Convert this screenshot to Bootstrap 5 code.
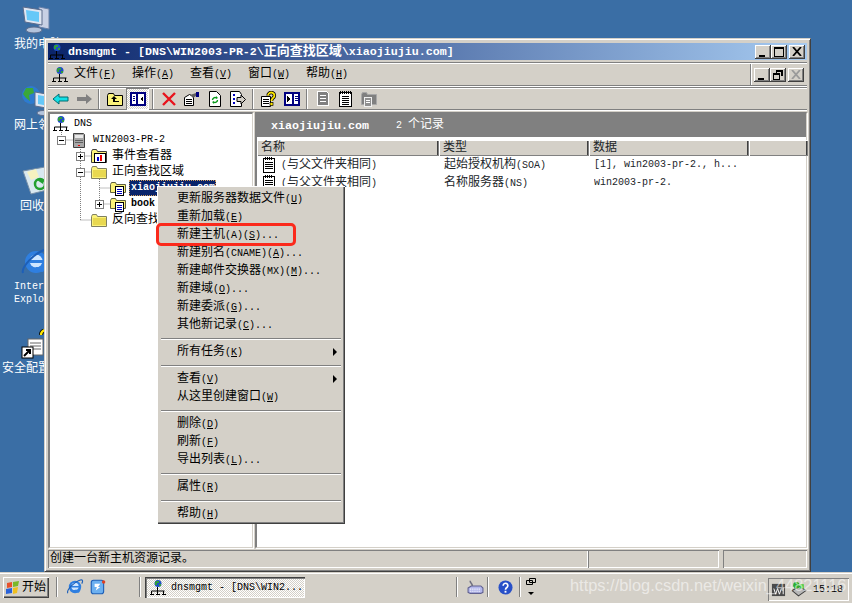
<!DOCTYPE html>
<html lang="zh">
<head>
  <meta charset="UTF-8" />
  <title>dnsmgmt</title>
  <meta name="viewport" content="width=device-width, initial-scale=1">
  <link href="https://cdn.jsdelivr.net/npm/bootstrap@5.3.3/dist/css/bootstrap.min.css" rel="stylesheet">
  <style>
    html, body { height: 100%; }
    body { background: #3a6ea5; font: 12px/16px "Liberation Mono", "Noto Sans CJK SC", monospace; color: #000; overflow: hidden; }
    .lt { font-size: 10px; }
    .ltb { font-size: 11.67px; font-weight: 700; }
    u { text-underline-offset: 1px; }
    .face { background: #d4d0c8; }
    .desk-page { width: 852px; height: 603px; }

    .desk-ico { left: -4px; width: 80px; color: #fff; line-height: 13px; }
    .desk-ico svg { display: block; margin: 0 auto 2px; }
    .di-pc { top: 3px; }
    .di-net { top: 84px; }
    .di-bin { top: 164px; }
    .di-ie { top: 246px; }
    .di-sec { top: 329px; }
    .lb-pc { margin: 4px 0 0 18px; }
    .lb-bin { margin: 5px 0 0 24px; }
    .lb-ie { margin: 2px 0 0 18px; font-size: 10px; }
    .lb-sec { margin: 0 0 0 6px; white-space: nowrap; }

    .dns-win { left: 44px; top: 38px; width: 767px; height: 534px; padding: 4px 3px 3px; border: 1px solid; border-color: #d4d0c8 #404040 #404040 #d4d0c8; box-shadow: inset 1px 1px 0 #fff, inset -1px -1px 0 #808080; }
    .cap { height: 17px; background: linear-gradient(90deg, #0a246a, #a6caf0); color: #fff; font-size: 13px; font-weight: 700; padding: 0 2px 0 1px; }
    .cap-txt { margin-left: 3px; }
    .cbtn { width: 16px; height: 14px; padding: 0; border: 0; background: #d4d0c8; box-shadow: inset -1px -1px 0 #404040, inset 1px 1px 0 #fff, inset -2px -2px 0 #808080; display: flex; align-items: center; justify-content: center; }
    .cbtn-x { margin-left: 2px; }
    .etched { border-top: 1px solid #fff; border-bottom: 1px solid #808080; box-shadow: 0 -1px 0 #808080, 0 1px 0 #fff; }
    .menubar { height: 23px; margin-top: 3px; padding-left: 4px; }
    .mitem { width: 58px; }
    .mitem:first-of-type { margin-left: 6px; }
    .childbtns { border-left: 1px solid #808080; box-shadow: inset 1px 0 0 #fff; height: 100%; padding: 0 3px; }
    .toolbar { height: 22px; margin-top: 2px; padding-left: 1px; }
    .tbtn { width: 23px; height: 22px; display: flex; align-items: center; justify-content: center; }
    .tbtn-on { background: repeating-conic-gradient(#fff 0 25%, #d4d0c8 0 50%) 0 0 / 2px 2px; box-shadow: inset 1px 1px 0 #808080, inset -1px -1px 0 #fff; }
    .tsep { width: 8px; height: 20px; position: relative; }
    .tsep::after { content: ""; position: absolute; left: 3px; top: 0; width: 2px; height: 20px; background: #808080; border-right: 1px solid #fff; }

    .panes { margin-top: 2px; min-height: 0; }
    .sunk { background: #fff; border-top: 2px solid #808080; border-left: 2px solid #808080; border-right: 1px solid #d4d0c8; border-bottom: 1px solid #d4d0c8; box-shadow: inset -1px -1px 0 #fff, 1px 1px 0 #fff; }
    .tree-pane { width: 205px; padding-top: 2px; }
    .right-pane { width: 552px; margin-left: 2px; }
    .tree-lines { position: absolute; left: 0; top: 0; }
    .tw { height: 16px; white-space: nowrap; position: relative; }
    .tl0 { padding-left: 3px; }
    .tl1 { padding-left: 7px; }
    .tl2 { padding-left: 26px; }
    .tl3 { padding-left: 45px; }
    .tbox { width: 9px; height: 9px; flex: none; }
    .ticon { margin-left: 6px; flex: none; }
    .tl0 .ticon { margin-left: 0; }
    .ttext { margin-left: 5px; }
    .tsel { margin-left: 3px; background: #0a246a; color: #fff; outline: 1px dotted #d4a060; outline-offset: -1px; padding: 0 2px; width: 87px; font-weight: 700; }

    .rec-head { height: 23px; background: #808080; color: #fff; padding-left: 14px; }
    .rec-head .n2 { margin-left: 27px; }
    .rec-tbl { table-layout: fixed; width: 551px; margin: 3px 0 0; --bs-table-bg: transparent; --bs-table-border-color: transparent; }
    .rec-tbl th { height: 16px; padding: 1px 0 0 4px; border: 0; font-weight: 400; background: #d4d0c8; box-shadow: inset 1px 1px 0 #fff, inset -1px -1px 0 #808080, inset -2px 0 0 #404040; line-height: 15px; }
    .rec-tbl td { padding: 0 0 0 5px; border: 0; }
    .rec-cell { height: 18px; display: flex; align-items: center; white-space: nowrap; overflow: hidden; }
    .rec-cell svg { flex: none; margin-right: 5px; }
    .c-name { width: 182px; }
    .c-type { width: 150px; }
    .c-data { width: 160px; }
    .c-rest { width: 59px; }

    .statusbar { height: 18px; margin-top: 2px; }
    .stcell { box-shadow: inset 1px 1px 0 #808080, inset -1px -1px 0 #fff; height: 18px; padding-left: 2px; line-height: 18px; }
    .st-main { width: 540px; }
    .st-mid { width: 131px; }
    .st-end { width: 84px; }

    .taskbar { left: 0; right: 0; top: 573px; height: 30px; border-top: 1px solid #fff; box-shadow: 0 -1px 0 #d4d0c8; padding: 3px 3px 0; }
    .taskbar > * { flex: none; }
    .startbtn { width: 46px; height: 21px; background: #d4d0c8; box-shadow: inset 1px 1px 0 #fff, inset -1px -1px 0 #404040, inset -2px -2px 0 #808080; padding-left: 2px; }
    .start-txt { margin-left: 1px; }
    .tb-sep { width: 2px; height: 20px; border-left: 1px solid #808080; border-right: 1px solid #fff; }
    .sp-a { margin: 0 7px; }
    .sp-b { margin-left: 32px; }
    .sp-c { margin-left: 151px; }
    .sp-d { margin-left: 3px; }
    .sp-e { margin-left: 6px; }
    .q-ie { margin: 1px 0 0 1px; }
    .q-ol { margin: 1px 0 0 5px; }
    .q-kb { margin: 1px 0 0 9px; }
    .q-help { margin: 3px 0 0 9px; }
    .q-res { margin-left: 5px; }
    .taskbtn { width: 160px; height: 21px; margin-left: 4px; background: repeating-conic-gradient(#fff 0 25%, #d4d0c8 0 50%) 0 0 / 2px 2px; box-shadow: inset 1px 1px 0 #404040, inset 2px 2px 0 #808080, inset -1px -1px 0 #fff; padding-left: 5px; }
    .task-txt { margin-left: 5px; white-space: nowrap; }
    .tray { width: 81px; height: 23px; margin-top: 1px; box-shadow: inset 1px 1px 0 #808080, inset -1px -1px 0 #fff; padding-left: 3px; }
    .clock { font-size: 10px; margin-left: 6px; }
    .wmark { left: 570px; top: 574px; font: 16.4px/22px "Liberation Sans", sans-serif; color: rgba(255, 255, 255, .55); white-space: nowrap; }

    .ctx { --bs-dropdown-min-width: 0; --bs-dropdown-padding-y: 0; --bs-dropdown-bg: #d4d0c8; --bs-dropdown-border-width: 0; --bs-dropdown-border-radius: 0; --bs-dropdown-font-size: 12px; --bs-dropdown-color: #000; --bs-dropdown-item-padding-x: 0; --bs-dropdown-item-padding-y: 0; left: 157px; top: 186px; width: 188px; height: 338px; padding: 4px 3px 0; box-shadow: inset 1px 1px 0 #fff, inset -1px -1px 0 #404040, inset -2px -2px 0 #808080; font-size: 12px; }
    .ctx .dropdown-item { height: 18px; line-height: 18px; padding-left: 17px; color: #000; position: relative; white-space: nowrap; }
    .ctx .ddv { height: 9px; position: relative; }
    .ctx .ddv::after { content: ""; position: absolute; left: 1px; right: 1px; top: 4px; height: 2px; background: #808080; border-bottom: 1px solid #fff; }
    .sub::after { content: ""; position: absolute; right: 5px; top: 5px; border-left: 4px solid #000; border-top: 4px solid transparent; border-bottom: 4px solid transparent; }
    .redmark { left: 156px; top: 223px; width: 140px; height: 23px; border: 3px solid #fb2a1c; border-radius: 5px; z-index: 1001; }
  </style>
</head>
<body>
  <svg class="position-absolute" width="0" height="0">
    <symbol id="i-net" viewBox="0 0 16 16">
      <circle cx="8" cy="3.5" r="3.5" fill="#1e4fc4"/><path d="M6 1h3v2H7v2H5V2zM9 4h2v2H9z" fill="#2f9e3a"/>
      <path d="M7.5 7v4M1.5 11h13M1.5 11v3M7.5 11v3M13.5 11v3M0 14.5h4M6 14.5h4M12 14.5h4" stroke="#000" fill="none"/>
    </symbol>
    <symbol id="i-server" viewBox="0 0 16 16">
      <path d="M1.500 1.500h10l1 1v13h-11z" fill="#a8a8a8" stroke="#404040"/><path d="M3 3h8v3H3z" fill="#e8e8e8"/><path d="M3 8.500h8M3 10.500h8" stroke="#606060"/><path d="M6 13h2v1H6z" fill="#e00"/>
    </symbol>
    <symbol id="i-folder" viewBox="0 0 16 16">
      <path d="M.5 4.500l1-2h4l1 2h9v10H.5z" fill="#fbf27a" stroke="#808060"/><path d="M2 6h13v7H2z" fill="#e8d850"/>
    </symbol>
    <symbol id="i-event" viewBox="0 0 16 16">
      <path d="M.5 3.500l1-2h4l1 2h9v11H.5z" fill="#fbf27a" stroke="#404040"/><rect x="3.500" y="5.500" width="11" height="9" fill="#fff" stroke="#000"/><path d="M7 9v4" stroke="#00c" stroke-width="2"/><path d="M10 7v6" stroke="#e00" stroke-width="2"/>
    </symbol>
    <symbol id="i-zone" viewBox="0 0 16 16">
      <path d="M.5 4.500l1-2h4l1 2h9v8H.5z" fill="#fbf27a" stroke="#606040"/><rect x="5.500" y="6.500" width="8" height="9" fill="#fff" stroke="#000"/><path d="M7 9.500h5M7 11.500h5M7 13.500h5" stroke="#0000c0"/>
    </symbol>
    <symbol id="i-rec" viewBox="0 0 14 16" shape-rendering="crispEdges">
      <rect x="1.500" y="1.500" width="11" height="14" fill="#fff" stroke="#000"/><path d="M3.500 0v3M5.500 0v3M7.500 0v3M9.500 0v3" stroke="#000"/><path d="M3 5.500h8M3 7.500h8M3 9.500h8M3 11.500h8" stroke="#000"/>
    </symbol>
    <symbol id="i-bk" viewBox="0 0 18 16">
      <path d="M1 8l6-5v3h9v4H7v3z" fill="#14e0e6" stroke="#006c70"/>
    </symbol>
    <symbol id="i-fw" viewBox="0 0 18 16">
      <path d="M17 8l-6-5v3H2v4h9v3z" fill="#808080"/>
    </symbol>
    <symbol id="i-up" viewBox="0 0 16 16">
      <path d="M.5 4.500l1-2h5l1 2h8v10H.5z" fill="#fbf27a" stroke="#000"/><path d="M7 5l-3 3h2v3h6v-1H8V8h2z" fill="#000"/>
    </symbol>
    <symbol id="i-ltree" viewBox="0 0 16 16" shape-rendering="crispEdges">
      <rect x="1" y="2" width="14" height="12" fill="#fff" stroke="#000080" stroke-width="2"/><path d="M6 3h2v10H6zM3 5h2v1H3zM3 7h2v1H3zM3 9h2v1H3z" fill="#000080"/><path d="M13 5v6l-3-3z" fill="#000"/>
    </symbol>
    <symbol id="i-rtree" viewBox="0 0 16 16" shape-rendering="crispEdges">
      <rect x="1" y="2" width="14" height="12" fill="#fff" stroke="#000080" stroke-width="2"/><path d="M8 3h2v10H8zM11 5h3v1h-3zM11 7h3v1h-3zM11 9h3v1h-3z" fill="#000080"/><path d="M3 5v6l3-3z" fill="#000"/>
    </symbol>
    <symbol id="i-x" viewBox="0 0 16 16">
      <path d="M2 2l12 12M14 2L2 14" stroke="#e8141c" stroke-width="2.400" fill="none"/>
    </symbol>
    <symbol id="i-props" viewBox="0 0 16 16">
      <path d="M.5 6.500l5-3 4 2v9h-9z" fill="#fff" stroke="#000"/><path d="M2 8.500h6M2 10.500h6M2 12.500h6" stroke="#000"/><path d="M6 4l6-2v3l-3 2z" fill="#606060"/><path d="M12 1h3v5h-3z" fill="#000080"/>
    </symbol>
    <symbol id="i-refresh" viewBox="0 0 16 16">
      <path d="M2.500 .5h7l4 4v11h-11z" fill="#fff" stroke="#000"/><path d="M5.500 9a2.500 2.500 0 0 1 4-2M10.500 9a2.500 2.500 0 0 1-4 2" stroke="#0a9a1a" stroke-width="1.400" fill="none"/><path d="M9 5l2 2-2 1zM7 13l-2-2 2-1z" fill="#0a9a1a"/>
    </symbol>
    <symbol id="i-export" viewBox="0 0 16 16">
      <path d="M.5 .5h9l2 3v12H.5z" fill="#fff" stroke="#000"/><path d="M3 3h2v2H3zM3 7h2v2H3zM3 11h2v2H3z" fill="#0000c0"/><path d="M7 6.500h4V4l4.500 4.500-4.500 4.500v-2.500H7z" fill="#d4d0c8" stroke="#000"/>
    </symbol>
    <symbol id="i-help" viewBox="0 0 16 16">
      <path d="M.5 5.500h9v10h-9z" fill="#fff" stroke="#000"/><path d="M2 8.500h6M2 10.500h6M2 12.500h6" stroke="#000"/><path d="M7 4.500a3.200 3 0 1 1 5 2.500c-1 .8-1.500 1.300-1.500 3" stroke="#000" stroke-width="3.400" fill="none"/><path d="M7 4.500a3.200 3 0 1 1 5 2.500c-1 .8-1.500 1.300-1.500 3" stroke="#ffe800" stroke-width="1.800" fill="none"/><rect x="9" y="11.500" width="3" height="3" fill="#ffe800" stroke="#000" stroke-width=".7"/>
    </symbol>
    <symbol id="i-gdoc" viewBox="0 0 16 16" shape-rendering="crispEdges">
      <path d="M2.500 .5h9l2 2v12h-11z" fill="#808080" stroke="#fff"/><path d="M5 4.500h6M5 7.500h6M5 10.500h6" stroke="#fff"/>
    </symbol>
    <symbol id="i-note" viewBox="0 0 16 16" shape-rendering="crispEdges">
      <rect x="1.500" y="1.500" width="12" height="14" fill="#fff" stroke="#000"/><path d="M2.500 0v3M4.500 0v3M6.500 0v3M8.500 0v3M10.500 0v3M12.500 0v3" stroke="#000"/><path d="M4 5.500h7M4 7.500h7M4 9.500h7M4 11.500h7M4 13.500h7" stroke="#000"/>
    </symbol>
    <symbol id="i-gfold" viewBox="0 0 16 16">
      <path d="M.5 3.500l1-2h4l1 2h9v10H.5z" fill="#808080" stroke="#a8a8a8"/><rect x="3.500" y="6.500" width="7" height="9" fill="#909090" stroke="#f0f0f0"/><path d="M5 9.500h4M5 11.500h4" stroke="#fff"/>
    </symbol>
    <symbol id="i-plus" viewBox="0 0 9 9">
      <rect x=".5" y=".5" width="8" height="8" fill="#fff" stroke="#808080"/><path d="M2 4.500h5M4.500 2v5" stroke="#000"/>
    </symbol>
    <symbol id="i-minus" viewBox="0 0 9 9">
      <rect x=".5" y=".5" width="8" height="8" fill="#fff" stroke="#808080"/><path d="M2 4.500h5" stroke="#000"/>
    </symbol>
    <symbol id="i-ie" viewBox="0 0 32 32">
      <circle cx="16" cy="16" r="11" fill="#2f7fe0"/><circle cx="16" cy="15" r="6.500" fill="#cfe6ff"/><path d="M9 14h15v3H9zM16 21h10l-3 5-10-1z" fill="#2f7fe0"/><path d="M3 27c-2-5 10-20 24-24 2 0 4 2 1 7" stroke="#1d5fb8" stroke-width="2" fill="none"/>
    </symbol>
  </svg>

  <div class="desk-page position-relative">
    <!-- desktop icons -->
    <div class="desk-ico di-pc position-absolute">
      <svg width="32" height="32" viewBox="0 0 32 32"><path d="M19 4l10 2v20l-10-2z" fill="#c8d0e4" stroke="#6880a8"/><path d="M3 4l19 3v15L5 19z" fill="#dfe6f2" stroke="#5c6c8c"/><path d="M6 7l13 2v10L7 17z" fill="#66c8f8"/><ellipse cx="14" cy="27" rx="8" ry="3" fill="#b4c4dc" stroke="#5c6c8c"/></svg>
      <div class="lb-pc">我的电脑</div>
    </div>
    <div class="desk-ico di-net position-absolute">
      <svg width="32" height="32" viewBox="0 0 32 32"><circle cx="11" cy="11" r="9" fill="#2d7bd0"/><path d="M6 4h7l1 5-5 2 1 6-4-3-3-4zM15 13l3 1-2 5z" fill="#3aa83a"/><path d="M15 8l17 3v14l-17-3z" fill="#dfe6f2" stroke="#5c6c8c"/><path d="M18 11l11 2v9l-11-2z" fill="#66c8f8"/><ellipse cx="23" cy="29" rx="6" ry="2.500" fill="#b4c4dc" stroke="#5c6c8c"/></svg>
      <div class="lb-pc">网上邻居</div>
    </div>
    <div class="desk-ico di-bin position-absolute">
      <svg width="32" height="32" viewBox="0 0 32 32"><path d="M3 7l22-4 6 22-20 5z" fill="#d8e8f0" stroke="#7890a8"/><path d="M7 8l9-3 3 8-8 3z" fill="#f6f2c0"/><circle cx="20" cy="20" r="5" fill="none" stroke="#22a030" stroke-width="2.500"/><path d="M17 16l6-1v5z" fill="#22a030"/></svg>
      <div class="lb-bin">回收站</div>
    </div>
    <div class="desk-ico di-ie position-absolute">
      <svg width="32" height="32"><use href="#i-ie"/></svg>
      <div class="lb-ie">Internet<br>Explorer</div>
    </div>
    <div class="desk-ico di-sec position-absolute">
      <svg width="32" height="32" viewBox="0 0 32 32"><rect x="8" y="10" width="15" height="16" fill="#fff" stroke="#666"/><path d="M10 14h11M10 17h11M10 20h11" stroke="#666"/><path d="M21 6a5 5 0 1 1 8 4c-2 1.500-2.500 3-2.500 6" stroke="#000" stroke-width="4" fill="none"/><path d="M21 6a5 5 0 1 1 8 4c-2 1.500-2.500 3-2.500 6" stroke="#ffe800" stroke-width="2.400" fill="none"/><rect x="2" y="18" width="11" height="11" fill="#fff" stroke="#000"/><path d="M4 27l6-6M6 21h4v4" stroke="#000" stroke-width="2" fill="none"/></svg>
      <div class="lb-sec">安全配置向导</div>
    </div>

    <!-- mmc window -->
    <div class="dns-win face position-absolute d-flex flex-column">
      <div class="cap d-flex align-items-center">
        <svg width="16" height="16"><use href="#i-net"/></svg>
        <span class="cap-txt text-nowrap"><span class="ltb">dnsmgmt - [DNS\WIN2003-PR-2\</span>正向查找区域<span class="ltb">\xiaojiujiu.com]</span></span>
        <div class="ms-auto d-flex">
          <button class="cbtn" type="button"><svg width="10" height="10"><path d="M1 8h6v2H1z"/></svg></button>
          <button class="cbtn" type="button"><svg width="10" height="10"><path d="M0 0h10v10H0zM1 2v7h8V2z" fill-rule="evenodd"/></svg></button>
          <button class="cbtn cbtn-x" type="button"><svg width="10" height="9"><path d="M1 0l8 9M9 0L1 9" stroke="#000" stroke-width="1.800"/></svg></button>
        </div>
      </div>

      <div class="menubar etched d-flex align-items-center">
        <svg width="16" height="16"><use href="#i-net"/></svg>
        <span class="mitem">文件<span class="lt">(<u>F</u>)</span></span>
        <span class="mitem">操作<span class="lt">(<u>A</u>)</span></span>
        <span class="mitem">查看<span class="lt">(<u>V</u>)</span></span>
        <span class="mitem">窗口<span class="lt">(<u>W</u>)</span></span>
        <span class="mitem">帮助<span class="lt">(<u>H</u>)</span></span>
        <div class="childbtns ms-auto d-flex align-items-center">
          <button class="cbtn" type="button"><svg width="10" height="10"><path d="M1 8h6v2H1z"/></svg></button>
          <button class="cbtn" type="button"><svg width="10" height="10"><path d="M3 0h7v6H8V2H4v1H3zM0 3h7v7H0zM1 5v4h5V5z" fill-rule="evenodd"/></svg></button>
          <button class="cbtn cbtn-x" type="button"><svg width="10" height="9"><path d="M1 0l8 9M9 0L1 9" stroke="#9a9a9a" stroke-width="1.800"/></svg></button>
        </div>
      </div>

      <div class="toolbar etched d-flex align-items-center">
        <span class="tbtn"><svg width="18" height="16"><use href="#i-bk"/></svg></span>
        <span class="tbtn"><svg width="18" height="16"><use href="#i-fw"/></svg></span>
        <span class="tsep"></span>
        <span class="tbtn"><svg width="16" height="16"><use href="#i-up"/></svg></span>
        <span class="tbtn tbtn-on"><svg width="16" height="16"><use href="#i-ltree"/></svg></span>
        <span class="tsep"></span>
        <span class="tbtn"><svg width="16" height="16"><use href="#i-x"/></svg></span>
        <span class="tbtn"><svg width="16" height="16"><use href="#i-props"/></svg></span>
        <span class="tbtn"><svg width="16" height="16"><use href="#i-refresh"/></svg></span>
        <span class="tbtn"><svg width="16" height="16"><use href="#i-export"/></svg></span>
        <span class="tsep"></span>
        <span class="tbtn"><svg width="16" height="16"><use href="#i-help"/></svg></span>
        <span class="tbtn"><svg width="16" height="16"><use href="#i-rtree"/></svg></span>
        <span class="tsep"></span>
        <span class="tbtn"><svg width="16" height="16"><use href="#i-gdoc"/></svg></span>
        <span class="tbtn"><svg width="16" height="16"><use href="#i-note"/></svg></span>
        <span class="tbtn"><svg width="16" height="16"><use href="#i-gfold"/></svg></span>
      </div>

      <div class="panes d-flex flex-grow-1">
        <div class="tree-pane sunk position-relative">
          <svg class="tree-lines" width="200" height="120" fill="none" stroke="#808080" stroke-dasharray="1 1">
            <path d="M11.500 18v8M11.500 26h14M30.500 33v73M30.500 42h12M30.500 58h12M30.500 106h12M49.500 63v27M49.500 74h11M49.500 90h11"/>
          </svg>
          <div class="tw tl0 d-flex align-items-center"><svg class="ticon" width="16" height="16"><use href="#i-net"/></svg><span class="ttext lt">DNS</span></div>
          <div class="tw tl1 d-flex align-items-center"><svg class="tbox"><use href="#i-minus"/></svg><svg class="ticon" width="16" height="16"><use href="#i-server"/></svg><span class="ttext lt">WIN2003-PR-2</span></div>
          <div class="tw tl2 d-flex align-items-center"><svg class="tbox"><use href="#i-plus"/></svg><svg class="ticon" width="16" height="16"><use href="#i-event"/></svg><span class="ttext">事件查看器</span></div>
          <div class="tw tl2 d-flex align-items-center"><svg class="tbox"><use href="#i-minus"/></svg><svg class="ticon" width="16" height="16"><use href="#i-folder"/></svg><span class="ttext">正向查找区域</span></div>
          <div class="tw tl3 d-flex align-items-center"><span class="tbox"></span><svg class="ticon" width="16" height="16"><use href="#i-zone"/></svg><span class="tsel lt">xiaojiujiu.com</span></div>
          <div class="tw tl3 d-flex align-items-center"><svg class="tbox"><use href="#i-plus"/></svg><svg class="ticon" width="16" height="16"><use href="#i-zone"/></svg><span class="ttext lt fw-bold">book.com</span></div>
          <div class="tw tl2 d-flex align-items-center"><span class="tbox"></span><svg class="ticon" width="16" height="16"><use href="#i-folder"/></svg><span class="ttext">反向查找区域</span></div>
        </div>
        <div class="right-pane sunk">
          <div class="rec-head d-flex align-items-center"><span class="ltb">xiaojiujiu.com</span><span class="n2"><span class="lt">2 </span>个记录</span></div>
          <table class="table rec-tbl">
            <colgroup><col class="c-name"><col class="c-type"><col class="c-data"><col class="c-rest"></colgroup>
            <thead><tr><th>名称</th><th>类型</th><th>数据</th><th></th></tr></thead>
            <tbody>
              <tr><td><div class="rec-cell"><svg width="14" height="16"><use href="#i-rec"/></svg><span><span class="lt">(</span>与父文件夹相同<span class="lt">)</span></span></div></td><td><div class="rec-cell"><span>起始授权机构<span class="lt">(SOA)</span></span></div></td><td colspan="2"><div class="rec-cell lt">[1], win2003-pr-2., h...</div></td></tr>
              <tr><td><div class="rec-cell"><svg width="14" height="16"><use href="#i-rec"/></svg><span><span class="lt">(</span>与父文件夹相同<span class="lt">)</span></span></div></td><td><div class="rec-cell"><span>名称服务器<span class="lt">(NS)</span></span></div></td><td colspan="2"><div class="rec-cell lt">win2003-pr-2.</div></td></tr>
            </tbody>
          </table>
        </div>
      </div>

      <div class="statusbar d-flex">
        <div class="stcell st-main">创建一台新主机资源记录。</div>
        <div class="stcell st-mid ms-auto"></div>
        <div class="stcell st-end ms-1"></div>
      </div>
    </div>

    <!-- taskbar -->
    <div class="taskbar face position-absolute d-flex">
      <div class="startbtn d-flex align-items-center">
        <svg width="16" height="16" viewBox="0 0 16 16"><path d="M2 3l5-1v5l-5 1z" fill="#e8502a"/><path d="M8 2l6-1-1 5-5 1z" fill="#7ab82a"/><path d="M1 9l6-1v5l-6 1z" fill="#2a62d8"/><path d="M8 8l5-1-1 6-4 1z" fill="#f0c020"/></svg>
        <span class="start-txt">开始</span>
      </div>
      <span class="tb-sep sp-a"></span>
      <svg class="q-ie" width="18" height="18"><use href="#i-ie"/></svg>
      <svg class="q-ol" width="18" height="18" viewBox="0 0 16 16"><rect x="2" y="2" width="11" height="12" rx="2" fill="#6cb0f0" stroke="#1d5fb8"/><path d="M5 5h5L8 8h2l-4 3 1-3H5z" fill="#fff"/><circle cx="13" cy="3.500" r="1.500" fill="#e04020"/></svg>
      <span class="tb-sep sp-b"></span>
      <div class="taskbtn d-flex align-items-center">
        <svg width="16" height="16"><use href="#i-net"/></svg><span class="lt task-txt">dnsmgmt - [DNS\WIN2...</span>
      </div>
      <span class="tb-sep sp-c"></span>
      <svg class="q-kb" width="17" height="18" viewBox="0 0 16 16"><path d="M1 9l3-2h9l2 2v4l-2 1H3l-2-1z" fill="#b4b8ec" stroke="#606090"/><path d="M3 10h9M3 12h9" stroke="#fff" stroke-dasharray="1 1"/><path d="M5 7c0-3-2-2-2-5" stroke="#707080" stroke-width="1.500" fill="none"/></svg>
      <span class="tb-sep sp-d"></span>
      <svg class="q-help" width="15" height="15" viewBox="0 0 16 16"><circle cx="8" cy="8" r="7.500" fill="#2850c8"/><path d="M5.500 6a2.500 2.500 0 1 1 4 2c-1 .7-1.500 1-1.500 2.500" stroke="#fff" stroke-width="1.800" fill="none"/><rect x="7" y="11.500" width="2" height="2" fill="#fff"/></svg>
      <span class="tb-sep sp-e"></span>
      <svg class="q-res" width="10" height="20" viewBox="0 0 10 20"><path d="M3.500 1.500h6v4h-6zM.5 3.500h6v4h-6z" fill="#d4d0c8" stroke="#000"/><path d="M2 15h6l-3 3z"/></svg>
      <div class="tray d-flex align-items-center ms-auto">
        <svg width="15" height="15" viewBox="0 0 16 16"><rect x="1" y="2" width="14" height="13" fill="#4a4a4a"/><path d="M3 7l2 6 2-6 2 6 2-6M13 6v7" stroke="#fff" fill="none"/></svg>
        <svg class="ms-1" width="17" height="17" viewBox="0 0 16 16"><path d="M2 9l7-4 6 4-7 5z" fill="#b8b8b8" stroke="#404040"/><circle cx="6" cy="4" r="3" fill="#2cae2c"/><path d="M9 3h4v4H9z" fill="#44cc44"/></svg>
        <span class="clock">15:18</span>
      </div>
    </div>
    <div class="wmark position-absolute">https://blog.csdn.net/weixin_44821116</div>

    <!-- context menu -->
    <ul class="dropdown-menu show ctx position-absolute list-unstyled m-0">
      <li><a class="dropdown-item" href="#">更新服务器数据文件<span class="lt">(<u>U</u>)</span></a></li>
      <li><a class="dropdown-item" href="#">重新加载<span class="lt">(<u>E</u>)</span></a></li>
      <li><a class="dropdown-item" href="#">新建主机<span class="lt">(A)(<u>S</u>)...</span></a></li>
      <li><a class="dropdown-item" href="#">新建别名<span class="lt">(CNAME)(<u>A</u>)...</span></a></li>
      <li><a class="dropdown-item" href="#">新建邮件交换器<span class="lt">(MX)(<u>M</u>)...</span></a></li>
      <li><a class="dropdown-item" href="#">新建域<span class="lt">(<u>O</u>)...</span></a></li>
      <li><a class="dropdown-item" href="#">新建委派<span class="lt">(<u>G</u>)...</span></a></li>
      <li><a class="dropdown-item" href="#">其他新记录<span class="lt">(<u>C</u>)...</span></a></li>
      <li class="ddv"></li>
      <li><a class="dropdown-item sub" href="#">所有任务<span class="lt">(<u>K</u>)</span></a></li>
      <li class="ddv"></li>
      <li><a class="dropdown-item sub" href="#">查看<span class="lt">(<u>V</u>)</span></a></li>
      <li><a class="dropdown-item" href="#">从这里创建窗口<span class="lt">(<u>W</u>)</span></a></li>
      <li class="ddv"></li>
      <li><a class="dropdown-item" href="#">删除<span class="lt">(<u>D</u>)</span></a></li>
      <li><a class="dropdown-item" href="#">刷新<span class="lt">(<u>F</u>)</span></a></li>
      <li><a class="dropdown-item" href="#">导出列表<span class="lt">(<u>L</u>)...</span></a></li>
      <li class="ddv"></li>
      <li><a class="dropdown-item" href="#">属性<span class="lt">(<u>R</u>)</span></a></li>
      <li class="ddv"></li>
      <li><a class="dropdown-item" href="#">帮助<span class="lt">(<u>H</u>)</span></a></li>
    </ul>
    <div class="redmark position-absolute"></div>
  </div>

  <script src="https://cdn.jsdelivr.net/npm/bootstrap@5.3.3/dist/js/bootstrap.bundle.min.js"></script>
</body>
</html>
